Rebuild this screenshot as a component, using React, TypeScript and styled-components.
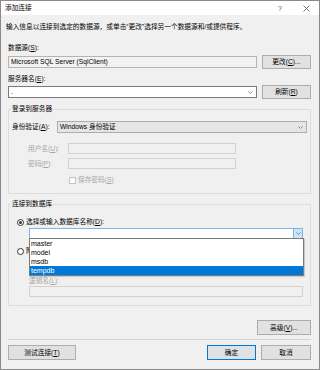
import styled, { createGlobalStyle } from "styled-components";

const GlobalStyle = createGlobalStyle`
  html, body { margin: 0; padding: 0; }
  body {
    font-family: "Liberation Sans", "Noto Sans CJK SC", sans-serif;
    font-size: 6.7px;
    color: #000;
    background: #f0f0f0;
  }
  * { box-sizing: border-box; }
`;

const Window = styled.div`
  width: 320px;
  height: 370px;
  border: 1px solid #8a8a8a;
  background: #f0f0f0;
  display: flex;
  flex-direction: column;
  overflow: hidden;
`;

const TitleBar = styled.div`
  height: 14px;
  flex: none;
  background: #fff;
  display: flex;
  align-items: center;
  padding-left: 4px;
`;

const TitleText = styled.div`
  flex: 1;
  line-height: 10px;
`;

const TitleButton = styled.div`
  width: 26px;
  height: 14px;
  display: flex;
  align-items: center;
  justify-content: center;
  color: #555;
  font-size: 7px;
`;

const Body = styled.div`
  padding: 0 8px 0 7px;
  display: flex;
  flex-direction: column;
`;

const Intro = styled.div`
  margin: 7px 0 0 -2px;
  line-height: 10px;
  white-space: nowrap;
`;

const Label = styled.div<{ $mt?: number; $disabled?: boolean }>`
  margin-top: ${(p) => p.$mt ?? 0}px;
  line-height: 10px;
  height: 10px;
  white-space: nowrap;
  color: ${(p) => (p.$disabled ? "#a6a6a6" : "#000")};
`;

const Row = styled.div<{ $mt?: number }>`
  margin-top: ${(p) => p.$mt ?? 0}px;
  height: 14px;
  display: flex;
  align-items: center;
  gap: 5px;
`;

const TextBox = styled.div<{ $readOnly?: boolean }>`
  flex: 1;
  height: 12px;
  border: 1px solid ${(p) => (p.$readOnly ? "#b4b4b4" : "#7a7a7a")};
  background: ${(p) => (p.$readOnly ? "#f2f2f2" : "#fff")};
  display: flex;
  align-items: center;
  padding: 0 3px 0 2px;
  line-height: 10px;
  white-space: nowrap;
`;

const BoxText = styled.span`
  flex: 1;
`;

const Button = styled.button<{ $w: number; $h?: number; $primary?: boolean }>`
  width: ${(p) => p.$w}px;
  height: ${(p) => p.$h ?? 14}px;
  flex: none;
  padding: 0;
  margin: 0;
  border: 1px solid ${(p) => (p.$primary ? "#0078d7" : "#adadad")};
  background: #e1e1e1;
  font: inherit;
  color: #000;
  line-height: 10px;
  white-space: nowrap;
`;

const Group = styled.fieldset<{ $mt: number }>`
  margin: ${(p) => p.$mt}px 0 0 0;
  padding: 0 3px 8px 3px;
  border: 1px solid #dcdcdc;
  min-width: 0;
`;

const GroupTitle = styled.legend`
  padding: 0 1px;
  margin-left: -1px;
  line-height: 10px;
  height: 10px;
`;

const AuthRow = styled.div`
  margin-top: 7px;
  display: flex;
  align-items: center;
  height: 12px;
`;

const AuthLabel = styled.div`
  width: 45px;
  line-height: 10px;
  white-space: nowrap;
`;

const ComboBox = styled.div`
  flex: 1;
  height: 12px;
  border: 1px solid #adadad;
  background: #e5e5e5;
  display: flex;
  align-items: center;
  padding: 0 3px 0 2px;
  line-height: 10px;
`;

const CredRow = styled.div<{ $mt: number }>`
  margin-top: ${(p) => p.$mt}px;
  padding-left: 16px;
  display: grid;
  grid-template-columns: 40px 168px;
  align-items: center;
  height: 11px;
`;

const DisabledBox = styled.div`
  height: 11px;
  border: 1px solid #d2d2d2;
  background: #f0f0f0;
`;

const CheckRow = styled.div`
  margin-top: 6px;
  padding-left: 57px;
  height: 10px;
  display: flex;
  align-items: center;
  gap: 2px;
  color: #a6a6a6;
  line-height: 10px;
`;

const CheckBox = styled.span`
  width: 7px;
  height: 7px;
  border: 1px solid #c4c4c4;
  background: #fff;
`;

const RadioRow = styled.div<{ $mt: number }>`
  margin: ${(p) => p.$mt}px 0 0 5px;
  height: 10px;
  display: flex;
  align-items: center;
  gap: 2px;
  line-height: 10px;
  white-space: nowrap;
`;

const Radio = styled.span<{ $checked?: boolean }>`
  width: 7px;
  height: 7px;
  border-radius: 50%;
  border: 1px solid #333;
  background: #fff;
  display: inline-flex;
  align-items: center;
  justify-content: center;
  &::after {
    content: "";
    width: 3px;
    height: 3px;
    border-radius: 50%;
    background: ${(p) => (p.$checked ? "#333" : "transparent")};
  }
`;

const Indented = styled.div<{ $mt?: number }>`
  margin: ${(p) => p.$mt ?? 0}px 0 0 17px;
  width: 274px;
`;

const DbCombo = styled.div`
  position: relative;
  height: 11px;
  border: 1px solid #7eb4ea;
  background: #fff;
  display: flex;
  justify-content: flex-end;
`;

const DbArrow = styled.div`
  width: 9px;
  height: 9px;
  background: #cce4f7;
  border-left: 1px solid #7eb4ea;
  display: flex;
  align-items: center;
  justify-content: center;
`;

const DropList = styled.div`
  position: absolute;
  top: 100%;
  left: -1px;
  right: -2px;
  border: 1px solid #7a7a7a;
  background: #fff;
  box-shadow: 1px 1px 1px rgba(0, 0, 0, 0.15);
  z-index: 2;
`;

const DropItem = styled.div<{ $selected?: boolean }>`
  height: 9px;
  line-height: 9px;
  padding-left: 1px;
  font-size: 7px;
  background: ${(p) => (p.$selected ? "#0078d7" : "transparent")};
  color: ${(p) => (p.$selected ? "#fff" : "#000")};
`;

const FileRow = styled.div`
  margin: 3px 0 0 17px;
  width: 274px;
  height: 12px;
  display: flex;
  gap: 5px;
`;

const RightRow = styled.div<{ $mt: number }>`
  margin-top: ${(p) => p.$mt}px;
  display: flex;
  justify-content: flex-end;
`;

const Separator = styled.div`
  margin-top: 4px;
  height: 1px;
  background: #d5d5d5;
`;

const Footer = styled.div`
  margin-top: 5px;
  display: flex;
  gap: 5px;
`;

const Spacer = styled.div`
  flex: 1;
`;

const Chevron = () => (
  <svg width="5" height="3" viewBox="0 0 5 3">
    <polyline points="0.4,0.4 2.5,2.5 4.6,0.4" fill="none" stroke="#777" strokeWidth="0.8" />
  </svg>
);

const CloseIcon = () => (
  <svg width="7" height="7" viewBox="0 0 7 7">
    <path d="M0.5 0.5 L6.5 6.5 M6.5 0.5 L0.5 6.5" stroke="#555" strokeWidth="0.8" />
  </svg>
);

export default function App() {
  return (
    <>
      <GlobalStyle />
      <Window>
        <TitleBar>
          <TitleText>添加连接</TitleText>
          <TitleButton>?</TitleButton>
          <TitleButton>
            <CloseIcon />
          </TitleButton>
        </TitleBar>
        <Body>
          <Intro>输入信息以连接到选定的数据源，或单击“更改”选择另一个数据源和/或提供程序。</Intro>

          <Label $mt={11}>
            数据源(<u>S</u>):
          </Label>
          <Row $mt={2}>
            <TextBox $readOnly>Microsoft SQL Server (SqlClient)</TextBox>
            <Button $w={49}>
              更改(<u>C</u>)...
            </Button>
          </Row>

          <Label $mt={5}>
            服务器名(<u>E</u>):
          </Label>
          <Row $mt={1}>
            <TextBox>
              <BoxText>.</BoxText>
              <Chevron />
            </TextBox>
            <Button $w={49}>
              刷新(<u>R</u>)
            </Button>
          </Row>

          <Group $mt={5}>
            <GroupTitle>登录到服务器</GroupTitle>
            <AuthRow>
              <AuthLabel>
                身份验证(<u>A</u>):
              </AuthLabel>
              <ComboBox>
                <BoxText>Windows 身份验证</BoxText>
                <Chevron />
              </ComboBox>
            </AuthRow>
            <CredRow $mt={10}>
              <Label $disabled>
                用户名(<u>U</u>):
              </Label>
              <DisabledBox />
            </CredRow>
            <CredRow $mt={4}>
              <Label $disabled>
                密码(<u>P</u>):
              </Label>
              <DisabledBox />
            </CredRow>
            <CheckRow>
              <CheckBox />
              <span>
                保存密码(<u>S</u>)
              </span>
            </CheckRow>
          </Group>

          <Group $mt={5}>
            <GroupTitle>连接到数据库</GroupTitle>
            <RadioRow $mt={8}>
              <Radio $checked />
              <span>
                选择或输入数据库名称(<u>D</u>):
              </span>
            </RadioRow>
            <Indented $mt={1}>
              <DbCombo>
                <DbArrow>
                  <Chevron />
                </DbArrow>
                <DropList>
                  <DropItem>master</DropItem>
                  <DropItem>model</DropItem>
                  <DropItem>msdb</DropItem>
                  <DropItem $selected>tempdb</DropItem>
                </DropList>
              </DbCombo>
            </Indented>
            <RadioRow $mt={7}>
              <Radio />
              <span>
                附加数据库文件(<u>H</u>):
              </span>
            </RadioRow>
            <FileRow>
              <DisabledBox style={{ flex: 1 }} />
            </FileRow>
            <Indented $mt={5}>
              <Label $disabled>
                逻辑名(<u>L</u>):
              </Label>
              <DisabledBox />
            </Indented>
          </Group>

          <RightRow $mt={14}>
            <Button $w={54} $h={15}>
              高级(<u>V</u>)...
            </Button>
          </RightRow>
          <Separator />
          <Footer>
            <Button $w={68} $h={15}>
              测试连接(<u>T</u>)
            </Button>
            <Spacer />
            <Button $w={49} $h={15} $primary>
              确定
            </Button>
            <Button $w={50} $h={15}>
              取消
            </Button>
          </Footer>
        </Body>
      </Window>
    </>
  );
}
